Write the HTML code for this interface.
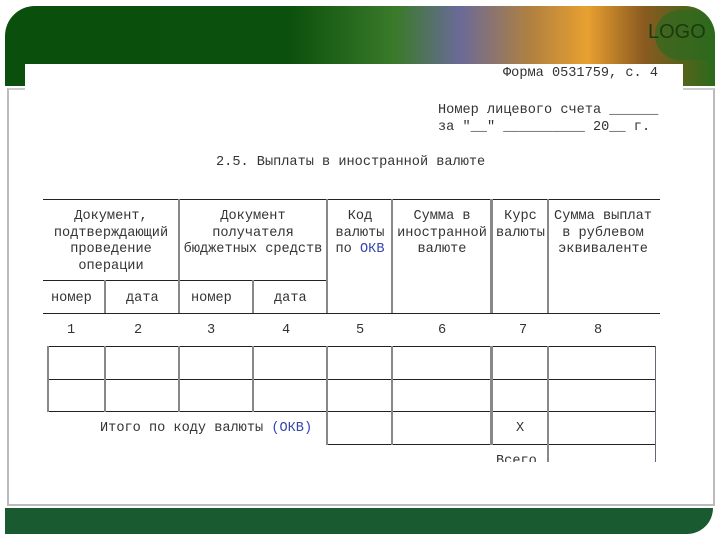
<!DOCTYPE html>
<html><head><meta charset="utf-8"><style>
body{margin:0;width:720px;height:540px;background:#fff;position:relative;overflow:hidden;font-family:"Liberation Mono",monospace;font-size:13.6px;color:#333}
.a{position:absolute}
.t{position:absolute;white-space:pre;line-height:16.5px}
.h{position:absolute;height:1px;background:#222}
.v{position:absolute;width:2px;background:#888}
.b{color:#3344aa}
</style></head><body>
<div class="a" style="left:5px;top:6px;width:710px;height:80px;border-radius:30px 30px 0 0;background:linear-gradient(90deg,#0a4f0b 0%,#0b500c 40%,#3a7a2a 55%,#6a6a98 64%,#b08040 74%,#e8a030 82%,#8a5a20 90%,#2a6a1a 100%)"></div>
<div class="a" style="left:655px;top:10px;width:60px;height:50px;border-radius:30px 30px 0 30px;background:#2e6a1e;opacity:.7"></div>
<div class="t" style="left:648px;top:24px;color:#1a3a10;font-family:'Liberation Sans',sans-serif;font-size:20px">LOGO</div>
<div class="a" style="left:7px;top:88px;width:704px;height:414px;border:2px solid #bbb;border-top:2px solid #ccc;background:#fff"></div>
<div class="a" style="left:25px;top:64px;width:658px;height:30px;background:#fff"></div>
<div class="a" style="left:5px;top:508px;width:708px;height:26px;background:#1a5a30;border-radius:0 0 26px 0"></div>
<div class="t" style="left:503px;top:66px">Форма 0531759, с. 4</div>
<div class="t" style="left:438px;top:103px">Номер лицевого счета ______
за "__" __________ 20__ г.</div>
<div class="t" style="left:216px;top:155px">2.5. Выплаты в иностранной валюте</div>
<div class="h" style="left:43px;top:199px;width:617px"></div>
<div class="h" style="left:43px;top:280px;width:284px"></div>
<div class="h" style="left:43px;top:313px;width:617px"></div>
<div class="h" style="left:48px;top:346px;width:608px"></div>
<div class="h" style="left:48px;top:379px;width:608px"></div>
<div class="h" style="left:48px;top:411px;width:608px"></div>
<div class="h" style="left:327px;top:444px;width:329px"></div>
<div class="v" style="left:47px;top:346px;height:66px"></div>
<div class="v" style="left:655px;top:346px;height:116px;width:1px;background:#667"></div>
<div class="v" style="left:178px;top:199px;height:114px"></div>
<div class="v" style="left:104px;top:280px;height:33px"></div>
<div class="v" style="left:252px;top:280px;height:33px"></div>
<div class="v" style="left:104px;top:346px;height:66px"></div>
<div class="v" style="left:178px;top:346px;height:66px"></div>
<div class="v" style="left:252px;top:346px;height:66px"></div>
<div class="v" style="left:326px;top:199px;height:114px"></div>
<div class="v" style="left:326px;top:346px;height:99px"></div>
<div class="v" style="left:391px;top:199px;height:114px"></div>
<div class="v" style="left:391px;top:346px;height:99px"></div>
<div class="v" style="left:490px;top:199px;height:114px;width:3px"></div>
<div class="v" style="left:490px;top:346px;height:99px;width:3px"></div>
<div class="v" style="left:547px;top:199px;height:114px"></div>
<div class="v" style="left:547px;top:346px;height:116px"></div>
<div class="t" style="left:43px;top:209px;width:136px;text-align:center">Документ,
подтверждающий
проведение
операции</div>
<div class="t" style="left:180px;top:209px;width:146px;text-align:center">Документ
получателя
бюджетных средств</div>
<div class="t" style="left:328px;top:209px;width:64px;text-align:center">Код
валюты
по <span class="b">ОКВ</span></div>
<div class="t" style="left:393px;top:209px;width:98px;text-align:center">Сумма в
иностранной
валюте</div>
<div class="t" style="left:493px;top:209px;width:55px;text-align:center">Курс
валюты</div>
<div class="t" style="left:549px;top:209px;width:108px;text-align:center">Сумма выплат
в рублевом
эквиваленте</div>
<div class="t" style="left:51px;top:291px">номер</div>
<div class="t" style="left:126px;top:291px">дата</div>
<div class="t" style="left:191px;top:291px">номер</div>
<div class="t" style="left:274px;top:291px">дата</div>
<div class="t" style="left:67px;top:323px">1</div>
<div class="t" style="left:134px;top:323px">2</div>
<div class="t" style="left:207px;top:323px">3</div>
<div class="t" style="left:282px;top:323px">4</div>
<div class="t" style="left:356px;top:323px">5</div>
<div class="t" style="left:438px;top:323px">6</div>
<div class="t" style="left:519px;top:323px">7</div>
<div class="t" style="left:594px;top:323px">8</div>
<div class="t" style="left:100px;top:421px">Итого по коду валюты <span class="b">(ОКВ)</span></div>
<div class="t" style="left:516px;top:421px">Х</div>
<div class="a" style="left:480px;top:452px;width:66px;height:10px;overflow:hidden"><div class="t" style="left:16px;top:2px">Всего</div></div>
</body></html>
